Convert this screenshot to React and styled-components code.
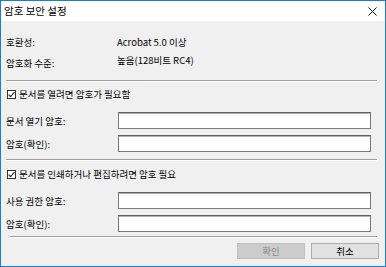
import React from "react"
import styled, { createGlobalStyle } from "styled-components"

const GlobalStyle = createGlobalStyle`
  html, body {
    margin: 0;
    padding: 0;
    background: #f0f0f0;
  }
  * {
    box-sizing: border-box;
  }
`

const font = `"Noto Sans CJK KR", "Noto Sans", sans-serif`

const Window = styled.div`
  width: 386px;
  height: 267px;
  border: 1px solid #1a7fd4;
  display: flex;
  flex-direction: column;
  font-family: ${font};
  color: #000;
  overflow: hidden;
`

const TitleBar = styled.div`
  height: 20px;
  background: #fff;
  display: flex;
  align-items: center;
  justify-content: space-between;
  padding: 0 8px 0 3px;
  flex-shrink: 0;
`

const Title = styled.span`
  font-size: 10.5px;
  line-height: 1;
`

const Close = styled.svg`
  width: 9px;
  height: 9px;
`

const Body = styled.div`
  flex: 1;
  background: #f0f0f0;
  padding: 10px 6px 0 5px;
  display: flex;
  flex-direction: column;
  font-size: 9.5px;
`

const InfoRow = styled.div`
  height: 21px;
  display: flex;
  align-items: center;
`

const InfoLabel = styled.span`
  width: 111px;
  flex-shrink: 0;
`

const InfoValue = styled.span`
  position: relative;
  top: ${(p) => p.$lift || 0}px;
`

const Separator = styled.div`
  height: 2px;
  border-top: 1px solid #a0a0a0;
  border-bottom: 1px solid #fff;
  margin: ${(p) => p.$mt}px 2px 0 ${(p) => p.$ml || 0}px;
`

const CheckRow = styled.label`
  height: 14px;
  margin-top: ${(p) => p.$mt}px;
  display: flex;
  align-items: center;
  gap: 3px;
`

const CheckBox = styled.span`
  width: 9px;
  height: 9px;
  border: 1px solid #333;
  background: #fff;
  display: flex;
  align-items: center;
  justify-content: center;
  margin-left: 1px;
`

const FieldRow = styled.div`
  display: flex;
  align-items: center;
  margin-top: ${(p) => p.$mt}px;
`

const FieldLabel = styled.span`
  width: 112px;
  flex-shrink: 0;
`

const Input = styled.div`
  width: 253px;
  height: 17px;
  background: #fff;
  border: 1px solid #7a7a7a;
  border-top-color: #5f5f5f;
  box-shadow: inset 0 1px 0 #b5b5b5;
`

const Footer = styled.div`
  display: flex;
  justify-content: flex-end;
  gap: 6px;
  margin-top: 5px;
  padding-right: 0;
`

const Button = styled.div`
  width: 68px;
  height: 16px;
  display: flex;
  align-items: center;
  justify-content: center;
  font-size: 9.5px;
  background: ${(p) => (p.$disabled ? "#cccccc" : "#e1e1e1")};
  border: 1px solid ${(p) => (p.$disabled ? "#bfbfbf" : "#adadad")};
  color: ${(p) => (p.$disabled ? "#8a8a8a" : "#000")};
`

const Check = () => (
  <CheckBox>
    <svg width="7" height="7" viewBox="0 0 7 7">
      <path d="M0.6 3.6 L2.6 5.6 L6.4 1" stroke="#222" strokeWidth="1.1" fill="none" />
    </svg>
  </CheckBox>
)

const App = () => {
  return (
    <>
      <GlobalStyle />
      <Window>
        <TitleBar>
          <Title>암호 보안 설정</Title>
          <Close viewBox="0 0 9 9">
            <path d="M0.5 0.5 L8.5 8.5 M8.5 0.5 L0.5 8.5" stroke="#111" strokeWidth="1" />
          </Close>
        </TitleBar>
        <Body>
          <InfoRow>
            <InfoLabel>호환성:</InfoLabel>
            <InfoValue>Acrobat 5.0 이상</InfoValue>
          </InfoRow>
          <InfoRow>
            <InfoLabel>암호화 수준:</InfoLabel>
            <InfoValue $lift={-3}>높음(128비트 RC4)</InfoValue>
          </InfoRow>
          <Separator $mt={7} />
          <CheckRow $mt={5}>
            <Check />
            문서를 열려면 암호가 필요함
          </CheckRow>
          <FieldRow $mt={11}>
            <FieldLabel>문서 열기 암호:</FieldLabel>
            <Input />
          </FieldRow>
          <FieldRow $mt={6}>
            <FieldLabel>암호(확인):</FieldLabel>
            <Input />
          </FieldRow>
          <Separator $mt={7} />
          <CheckRow $mt={6}>
            <Check />
            문서를 인쇄하거나 편집하려면 암호 필요
          </CheckRow>
          <FieldRow $mt={11}>
            <FieldLabel>사용 권한 암호:</FieldLabel>
            <Input />
          </FieldRow>
          <FieldRow $mt={6}>
            <FieldLabel>암호(확인):</FieldLabel>
            <Input />
          </FieldRow>
          <Separator $mt={4} $ml={4} />
          <Footer>
            <Button $disabled>확인</Button>
            <Button>취소</Button>
          </Footer>
        </Body>
      </Window>
    </>
  )
}

export default App
